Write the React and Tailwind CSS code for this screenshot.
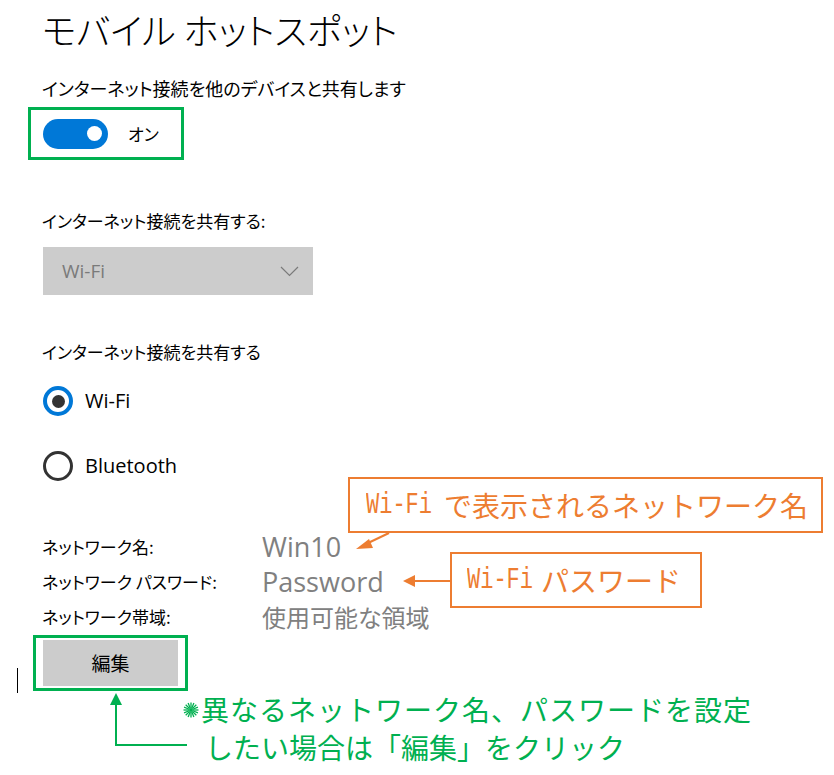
import React from 'react';

const jp = "font-['Noto_Sans_CJK_JP','Noto_Sans',sans-serif]";
const latin = "font-['Open_Sans','Noto_Sans','Noto_Sans_CJK_JP',sans-serif]";
const mono = "inline-block font-['Liberation_Mono',monospace] text-[22px] scale-y-[1.35]";

function Radio({ checked, label }) {
  return (
    <div className="flex items-center gap-[12px] h-[30px]">
      {checked ? (
        <div className="w-[30px] h-[30px] rounded-full border-[4px] border-[#0078d7] flex items-center justify-center">
          <div className="w-[13px] h-[13px] rounded-full bg-[#333333]" />
        </div>
      ) : (
        <div className="w-[30px] h-[30px] rounded-full border-[3px] border-[#333333]" />
      )}
      <span className={`${latin} text-[20px] leading-[30px]`}>{label}</span>
    </div>
  );
}

function Burst() {
  // the small ✺ mark in front of the green note
  const rays = [];
  for (let i = 0; i < 16; i++) {
    const a = (i * Math.PI) / 8;
    rays.push(
      <line key={i} x1={8 + Math.cos(a) * 2} y1={8 + Math.sin(a) * 2} x2={8 + Math.cos(a) * 7.5} y2={8 + Math.sin(a) * 7.5} stroke="#00b050" strokeWidth="1.3" />
    );
  }
  return (
    <svg width="16" height="16" viewBox="0 0 16 16" className="inline-block mr-[2px] -translate-y-[3px]">
      {rays}
      <circle cx="8" cy="8" r="2" fill="#00b050" />
    </svg>
  );
}

export default function App() {
  return (
    <div className={`relative w-[834px] h-[775px] bg-white overflow-hidden text-black ${jp}`}>
      {/* settings page */}
      <div className="pl-[42px] [font-feature-settings:'palt']">
        <h1 className="pt-[6px] text-[36px] leading-[46px] font-light">モバイル ホットスポット</h1>

        <p className="mt-[24px] text-[18px] leading-[24px]">インターネット接続を他のデバイスと共有します</p>

        <div className="-ml-[14px] mt-[7px] w-[156px] h-[53px] border-[3px] border-[#00b050] flex items-center pl-[12px] gap-[20px]">
          <div className="w-[65px] h-[30px] rounded-full bg-[#0078d7] flex items-center justify-end pr-[6px]">
            <div className="w-[15px] h-[15px] rounded-full bg-white" />
          </div>
          <span className="text-[17px]">オン</span>
        </div>

        <p className="mt-[49px] text-[17px] leading-[24px]">インターネット接続を共有する:</p>

        <div className="ml-[1px] mt-[14px] w-[270px] h-[48px] bg-[#cccccc] flex items-center justify-between pl-[19px] pr-[14px]">
          <span className={`${latin} text-[19px] text-[#7a7a7a]`}>Wi-Fi</span>
          <svg width="19" height="11" viewBox="0 0 19 11">
            <path d="M1 1 L9.5 9.5 L18 1" fill="none" stroke="#7a7a7a" strokeWidth="1.2" />
          </svg>
        </div>

        <p className="mt-[45px] text-[17px] leading-[24px]">インターネット接続を共有する</p>

        <div className="ml-[1px] mt-[22px] flex flex-col gap-[35px]">
          <Radio checked label="Wi-Fi" />
          <Radio label="Bluetooth" />
        </div>

        <div className="mt-[50px] grid grid-cols-[220px_1fr] gap-y-[3px] items-center">
          <span className="text-[17px] leading-[32px]">ネットワーク名:</span>
          <span className={`${latin} text-[27px] leading-[32px] text-[#808080]`}>Win10</span>
          <span className="text-[17px] leading-[32px]">ネットワーク パスワード:</span>
          <span className={`${latin} text-[27px] leading-[32px] text-[#808080]`}>Password</span>
          <span className="text-[17px] leading-[32px]">ネットワーク帯域:</span>
          <span className="text-[24px] leading-[32px] text-[#808080]">使用可能な領域</span>
        </div>

        <div className="-ml-[9px] mt-[2px] w-[155px] h-[56px] border-[3px] border-[#00b050] px-[7px] py-[2px]">
          <div className="w-full h-full bg-[#cccccc] flex items-center justify-center text-[19px]">編集</div>
        </div>
      </div>

      {/* text cursor */}
      <div className="absolute left-[17px] top-[668px] w-px h-[25px] bg-black" />

      {/* orange callouts */}
      <div className="absolute left-[348px] top-[477px] w-[475px] h-[56px] border-2 border-[#ed7d31] flex items-center pl-[16px] text-[28px] text-[#ed7d31]">
        <span className={`${mono} mr-[12px]`}>Wi-Fi</span>
        <span>で表示されるネットワーク名</span>
      </div>
      <div className="absolute left-[450px] top-[552px] w-[252px] h-[56px] border-2 border-[#ed7d31] flex items-center pl-[15px] text-[28px] text-[#ed7d31]">
        <span className={`${mono} mr-[8px]`}>Wi-Fi</span>
        <span>パスワード</span>
      </div>
      <svg className="absolute left-0 top-0 pointer-events-none" width="834" height="775" viewBox="0 0 834 775">
        <line x1="389" y1="533" x2="366" y2="544" stroke="#ed7d31" strokeWidth="2" />
        <polygon points="356,549 369,539 373,548" fill="#ed7d31" />
        <line x1="450" y1="581" x2="412" y2="581" stroke="#ed7d31" strokeWidth="2" />
        <polygon points="403,581 415,575 415,587" fill="#ed7d31" />
        <line x1="116" y1="703" x2="116" y2="745" stroke="#00b050" strokeWidth="2" />
        <line x1="115" y1="745" x2="187" y2="745" stroke="#00b050" strokeWidth="2" />
        <polygon points="116,693 110,705 122,705" fill="#00b050" />
      </svg>

      {/* green note */}
      <div className="absolute left-[183px] top-[690px] text-[28px] leading-[38px] text-[#00b050]">
        <p className="tracking-[1px]"><Burst />異なるネットワーク名、パスワードを設定</p>
        <p className="pl-[22px]">したい場合は「編集」をクリック</p>
      </div>
    </div>
  );
}
